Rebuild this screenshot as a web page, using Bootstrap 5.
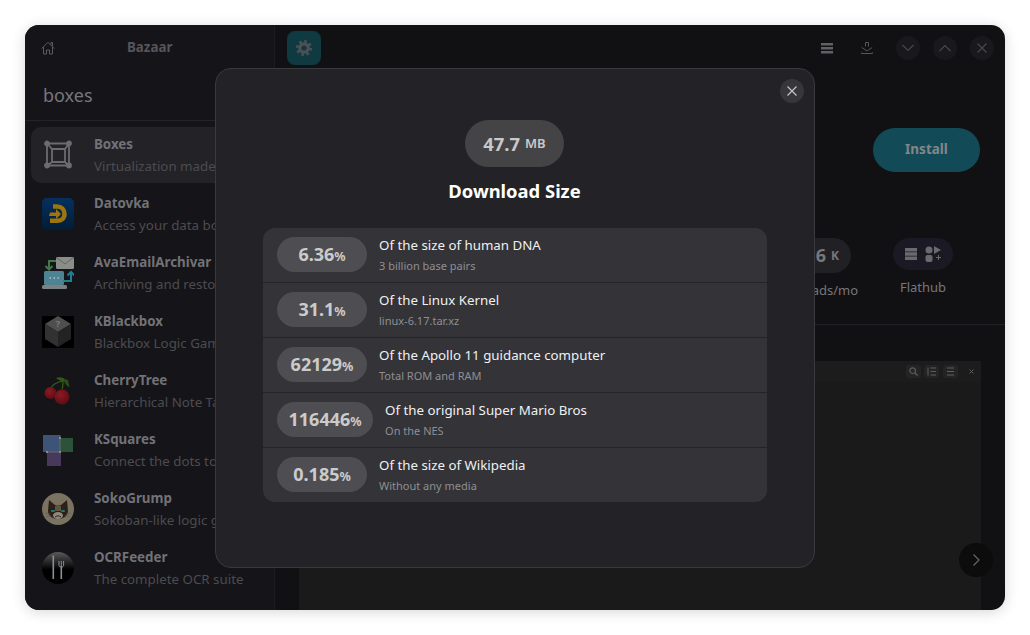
<!DOCTYPE html>
<html lang="en">
<head>
  <meta charset="UTF-8" />
  <title>Bazaar</title>
  <link href="https://cdn.jsdelivr.net/npm/bootstrap@5.3.0/dist/css/bootstrap.min.css" rel="stylesheet">
  <style>
    html, body { height: 100%; }
    body {
      font-family: "Noto Sans", sans-serif;
      background: #fff;
      padding: 25px 25px 25px 25px;
      overflow: hidden;
    }
    .app-window {
      height: 585px;
      border-radius: 14px;
      background: #111114;
      box-shadow: 0 2px 14px rgba(0,0,0,.16);
      overflow: hidden;
    }
    .app-side {
      width: 250px;
      background: #151419;
      border-right: 1px solid #1c1b20;
      flex-shrink: 0;
    }
    .side-head { height: 44px; padding: 0 16px; }
    .home-icon { margin-top: 2px; }
    .side-title { color: #55555a; font-size: 13.33px; font-weight: 700; margin: 2px 0 0 72px; }
    .search-word { color: #77777b; font-size: 18px; line-height: 25px; padding: 14px 18px 12px; border-bottom: 1px solid #242328; }
    .result-list { padding: 6px 6px 0; }
    .result-item { height: 56px; margin-bottom: 3px; padding: 0 11px; gap: 20px; border-radius: 10px; }
    .result-item.is-active { background: #232227; }
    .result-icon { width: 32px; height: 32px; flex-shrink: 0; display: block; }
    .result-name { color: #727276; font-size: 13.33px; font-weight: 700; line-height: 20px; white-space: nowrap; }
    .result-sub { color: #4c4c50; font-size: 13.33px; line-height: 20px; margin-top: 2px; white-space: nowrap; }
    .app-main { min-width: 0; }
    .main-head { height: 46px; padding: 6px 11px 0 12px; }
    .gear-tile { width: 34px; height: 34px; border-radius: 8px; background: #103a41; }
    .head-tools { height: 34px; }
    .tool-menu { margin-right: 28px; }
    .tool-get { margin-right: 23px; }
    .head-btns { gap: 13px; }
    .head-btn { width: 24px; height: 24px; border-radius: 50%; background: #19191d; }
    .install-row { padding: 57px 25px 0 0; height: 101px; }
    .install-btn { width: 107px; height: 44px; padding-bottom: 2px; border-radius: 22px; background: #124b57; color: #838688; font-size: 13.5px; font-weight: 700; }
    .stat-row { height: 86px; padding-right: 52px; margin-top: 66px; gap: 35px; }
    .stat-cell { color: #77777b; font-size: 13px; }
    .stat-pill { height: 35px; margin: 0 7px; border-radius: 18px; background: #212125; color: #77777b; font-size: 18px; font-weight: 700; padding: 0 12px 0 0; }
    .stat-pill span { font-size: 12px; margin-left: 5px; }
    .repo-pill { width: 60px; height: 32px; border-radius: 16px; background: #1a1924; }
    .shots-area { flex: 1; border-top: 1px solid #212125; padding: 36px 24px 0; min-height: 0; }
    .shot-panel { height: 100%; background: #1a1a1b; }
    .shot-bar { height: 21px; background: #1c1c1d; padding-right: 2px; gap: 3.5px; }
    .shot-tool { width: 15px; height: 13px; border-radius: 3px; background: #242425; }
    .shot-tool.is-bare { background: none; margin-left: 3px; }
    .next-btn { right: 12px; bottom: 33px; width: 34px; height: 34px; border-radius: 50%; background: #0c0c0d; }
    .size-dialog {
      left: 190px; top: 43px; width: 600px; height: 500px;
      background: #232327;
      border: 1px solid #3a3a3e;
      border-radius: 16px;
      padding: 51px 47px 0;
    }
    .dialog-close { right: 10px; top: 10px; width: 24px; height: 24px; border-radius: 50%; background: #37373b; border: 0; padding: 0; }
    .size-pill { height: 47px; width: 99px; margin-left: -1px; border-radius: 24px; background: #444447; color: #c9c9ca; font-size: 18.4px; font-weight: 700; gap: 5px; }
    .size-pill span { font-size: 13px; font-weight: 600; }
    .size-title { color: #fff; font-size: 18.4px; font-weight: 700; line-height: 25px; margin: 11px 1px 25px 0; }
    .fact-list { border-radius: 12px; background: #333338; overflow: hidden; }
    .fact-row { height: 55px; padding: 0 14px 1px; gap: 12px; border-top: 1px solid #242428; }
    .fact-row:first-child { border-top: 0; height: 54px; }
    .fact-pill { min-width: 90px; height: 35px; padding: 0 11.5px; border-radius: 18px; background: #4e4e52; color: #cbcbcc; font-size: 18px; font-weight: 700; white-space: nowrap; }
    .fact-pill span { font-size: 12.5px; }
    .fact-name { color: #f0f0f1; font-size: 13.3px; line-height: 18px; }
    .fact-note { color: #8f8f93; font-size: 11px; line-height: 15px; margin-top: 4px; }
  </style>
</head>
<body>

<div class="app-window d-flex position-relative">

  <div class="app-side d-flex flex-column">
    <div class="side-head d-flex align-items-center">
      <svg class="home-icon" width="14" height="14" viewBox="0 0 14 14" fill="none" stroke="#5c5c60" stroke-width="1"><path d="M.8 7.500 7 1.300l6.200 6.200M2.500 6v7h3V9h3v4h3V6M10 3.500V1.500h1.500v3.500"/></svg>
      <div class="side-title">Bazaar</div>
    </div>
    <div class="search-word">boxes</div>
    <div class="result-list">
      <div class="result-item is-active d-flex align-items-center">
        <svg class="result-icon" viewBox="0 0 32 32" fill="#6c6c70" stroke="#6c6c70" stroke-width="1.800"><path fill="none" d="M5 4.500h22v22H5zM10 10h13v13H10zM5 4.500l5 5.500M27 4.500 23 10M5 26.500l5-3.500M27 26.500 23 23"/><circle cx="5" cy="4.500" r="2"/><circle cx="27" cy="4.500" r="2"/><circle cx="5" cy="26.500" r="2"/><circle cx="27" cy="26.500" r="2"/></svg>
        <div><div class="result-name">Boxes</div><div class="result-sub">Virtualization made simple</div></div>
      </div>
      <div class="result-item d-flex align-items-center">
        <svg class="result-icon" viewBox="0 0 32 32"><defs><linearGradient id="dtvBg" x1="0" y1="0" x2="0" y2="1"><stop offset="0" stop-color="#05305f"/><stop offset="1" stop-color="#031c36"/></linearGradient></defs><rect width="32" height="32" rx="5" fill="url(#dtvBg)"/><path d="M11 8.500h4c4.500 0 7.500 3 7.500 7.500s-3 6.800-7.500 6.800H8" fill="none" stroke="#9c7510" stroke-width="4.500"/><path d="M8 14.500h6v-3.500l5 5-5 5v-3H7z" fill="#9c7510"/></svg>
        <div><div class="result-name">Datovka</div><div class="result-sub">Access your data boxes</div></div>
      </div>
      <div class="result-item d-flex align-items-center">
        <svg class="result-icon" viewBox="0 0 32 32"><rect x="14" y="0" width="18" height="12" rx="1.500" fill="#8a8d88"/><path d="M14.500 .5l8.500 6.500 8.500-6.500" fill="none" stroke="#666864"/><rect x="2" y="14" width="20" height="14" rx="1.500" fill="#4e8391"/><rect x="0" y="28" width="25" height="4" rx="1.500" fill="#7c8184"/><path d="M14 4H7v7M3.500 9 7 12.500 10.500 9" fill="none" stroke="#3f7a49" stroke-width="2"/><path d="M21 24h8v-8M25.500 18.500 29 15l3.500 3.500" fill="none" stroke="#1f7f95" stroke-width="2"/><path d="M7.500 21h1.500M11.500 21h1.500M15.500 21h1.500" stroke="#a9c3c9" stroke-width="1.500"/></svg>
        <div><div class="result-name">AvaEmailArchivar</div><div class="result-sub">Archiving and restoring emails</div></div>
      </div>
      <div class="result-item d-flex align-items-center">
        <svg class="result-icon" viewBox="0 0 32 32"><rect width="32" height="32" fill="#000"/><path d="M16 0 29 8 16 16 3 8z" fill="#4f4f4f"/><path d="M3 8l13 8v15L3 23z" fill="#323232"/><path d="M29 8 16 16v15l13-8z" fill="#232323"/><text x="16" y="11" text-anchor="middle" font-family="Noto Sans" font-weight="700" font-size="9" fill="#7c7c7c">?</text></svg>
        <div><div class="result-name">KBlackbox</div><div class="result-sub">Blackbox Logic Game</div></div>
      </div>
      <div class="result-item d-flex align-items-center">
        <svg class="result-icon" viewBox="0 0 32 32"><defs><radialGradient id="chBall" cx=".4" cy=".35" r=".7"><stop offset="0" stop-color="#8c1a22"/><stop offset="1" stop-color="#5a0c12"/></radialGradient></defs><path d="M21 6C15 7 10 10 9 13M21 6c0 3 0 6-1 8" fill="none" stroke="#3f5a1c" stroke-width="1.200"/><path d="M14 3c4-2 9 0 10 3-4 1-8-1-10-3z" fill="#2f5a18"/><path d="M22 4l4 1 1.500 7c-3-1-5.500-4-5.500-8z" fill="#29500f"/><circle cx="8.500" cy="18" r="6" fill="url(#chBall)"/><circle cx="20" cy="22" r="7.500" fill="url(#chBall)"/></svg>
        <div><div class="result-name">CherryTree</div><div class="result-sub">Hierarchical Note Taking</div></div>
      </div>
      <div class="result-item d-flex align-items-center">
        <svg class="result-icon" viewBox="0 0 32 32"><rect x="18" y="4" width="13" height="14" fill="#2a5339"/><rect x="5" y="18" width="14" height="14" fill="#46395c"/><rect x="1" y="1" width="17" height="17" fill="#3d5478"/><path d="M18 1v17H5" fill="none" stroke="#6a6a6a"/><path d="M17 3h2v2h-2zM17 17h2v2h-2zM4 17h2v2H4z" fill="#8a8a8a"/></svg>
        <div><div class="result-name">KSquares</div><div class="result-sub">Connect the dots to create</div></div>
      </div>
      <div class="result-item d-flex align-items-center">
        <svg class="result-icon" viewBox="0 0 32 32"><circle cx="16" cy="16" r="16" fill="#7b7361"/><path d="M7 7l6 5h6l6-5 1 11c0 5-5 8-10 8S6 23 6 18z" fill="#2c2119"/><path d="M13 13l3-1.500 3 1.500v5h-6z" fill="#5f5344"/><ellipse cx="16" cy="22.500" rx="5" ry="3.500" fill="#8f8a7c"/><path d="M13 24c2-1.500 4-1.500 6 0" fill="none" stroke="#2c2119"/><ellipse cx="11" cy="18" rx="2.200" ry="1.100" fill="#1f7f7a"/><ellipse cx="21" cy="18" rx="2.200" ry="1.100" fill="#1f7f7a"/><path d="M3 20l5 1M4 24l5-1.500M29 20l-5 1M28 24l-5-1.500" stroke="#5c564a" stroke-width=".6"/></svg>
        <div><div class="result-name">SokoGrump</div><div class="result-sub">Sokoban-like logic game</div></div>
      </div>
      <div class="result-item d-flex align-items-center">
        <svg class="result-icon" viewBox="0 0 32 32"><defs><linearGradient id="ocrBg" x1="0" y1="0" x2="0" y2="1"><stop offset="0" stop-color="#5a5a5a"/><stop offset=".55" stop-color="#000"/></linearGradient></defs><circle cx="16" cy="16" r="16" fill="url(#ocrBg)"/><path d="M11.300 3.500v23.500" stroke="#8a8f96" stroke-width="1.600"/><path d="M19.300 14v13" stroke="#8a8f96" stroke-width="1.600"/><path d="M17 9v4.500c0 1 1 1.500 2.300 1.500s2.300-.5 2.300-1.500V9M19.300 9v5" fill="none" stroke="#8a8f96"/></svg>
        <div><div class="result-name">OCRFeeder</div><div class="result-sub">The complete OCR suite</div></div>
      </div>
    </div>
  </div>

  <div class="app-main flex-grow-1 d-flex flex-column">
    <div class="main-head d-flex align-items-start justify-content-between">
      <div class="gear-tile d-flex align-items-center justify-content-center">
        <svg width="16" height="16" viewBox="0 0 16 16"><circle cx="8" cy="8" r="5.800" fill="#4e5154"/><circle cx="8" cy="8" r="6.800" fill="none" stroke="#4e5154" stroke-width="2.400" stroke-dasharray="2.700 2.640"/><circle cx="8" cy="8" r="2.600" fill="#103a41"/></svg>
      </div>
      <div class="head-tools d-flex align-items-center">
        <svg class="tool-menu" width="12" height="11" viewBox="0 0 12 11" fill="#616165"><path d="M0 0h12v2.400H0zM0 4h12v2.400H0zM0 8h12v2.400H0z"/></svg>
        <svg class="tool-get" width="12" height="12" viewBox="0 0 12 12" fill="none" stroke="#55555a"><path d="M4.500 4.500v-4h3v4M.8 5.500 6 9l5.200-3.500M.5 10.500v1h11v-1"/></svg>
        <div class="head-btns d-flex align-items-center">
          <div class="head-btn d-flex align-items-center justify-content-center"><svg width="12" height="8" viewBox="0 0 12 8" fill="none" stroke="#48484c" stroke-width="1.100"><path d="M.5 1 6 6.500 11.500 1"/></svg></div>
          <div class="head-btn d-flex align-items-center justify-content-center"><svg width="12" height="8" viewBox="0 0 12 8" fill="none" stroke="#48484c" stroke-width="1.100"><path d="M.5 7 6 1.500 11.500 7"/></svg></div>
          <div class="head-btn d-flex align-items-center justify-content-center"><svg width="10" height="10" viewBox="0 0 10 10" fill="none" stroke="#48484c" stroke-width="1.100"><path d="M.5.5l9 9M9.500.5l-9 9"/></svg></div>
        </div>
      </div>
    </div>
    <div class="install-row d-flex justify-content-end">
      <div class="install-btn d-flex align-items-center justify-content-center">Install</div>
    </div>
    <div class="stat-row d-flex justify-content-end">
      <div class="stat-cell text-center">
        <div class="stat-pill d-flex align-items-center justify-content-end">1.6<span>K</span></div>
        <div class="mt-2">Downloads/mo</div>
      </div>
      <div class="stat-cell text-center">
        <div class="repo-pill d-flex align-items-center justify-content-center gap-2">
          <svg width="12" height="12" viewBox="0 0 12 12" fill="#6a6a6e"><path d="M0 0h12v3.400H0zM0 4.300h12v3.400H0zM0 8.600h12V12H0z"/></svg>
          <svg width="16" height="16" viewBox="0 0 16 16" fill="#6a6a6e"><circle cx="4" cy="4" r="3.500"/><path d="M9 0l7 4-7 4z"/><rect x=".5" y="9" width="7" height="7" rx="2"/><path d="M11 11h2V9h1v2h2v1h-2v2h-1v-2h-2z"/></svg>
        </div>
        <div class="mt-2">Flathub</div>
      </div>
    </div>
    <div class="shots-area">
      <div class="shot-panel">
        <div class="shot-bar d-flex align-items-center justify-content-end">
          <div class="shot-tool d-flex align-items-center justify-content-center"><svg width="9" height="9" viewBox="0 0 9 9" fill="none" stroke="#5e5e5f" stroke-width="1.200"><circle cx="3.700" cy="3.700" r="2.800"/><path d="M6 6l2.500 2.500"/></svg></div>
          <div class="shot-tool d-flex align-items-center justify-content-center"><svg width="9" height="9" viewBox="0 0 9 9" fill="none" stroke="#5e5e5f"><path d="M3.500 1H9M3.500 4.500H9M3.500 8H9M1 .5v8"/></svg></div>
          <div class="shot-tool d-flex align-items-center justify-content-center"><svg width="9" height="9" viewBox="0 0 9 9" fill="none" stroke="#5e5e5f"><path d="M1 1h7M1 4.500h7M1 8h7"/></svg></div>
          <div class="shot-tool is-bare d-flex align-items-center justify-content-center"><svg width="5" height="5" viewBox="0 0 5 5" fill="none" stroke="#5e5e5f"><path d="M.5.5l4 4M4.500.5l-4 4"/></svg></div>
        </div>
      </div>
    </div>
  </div>

  <div class="next-btn position-absolute d-flex align-items-center justify-content-center">
    <svg width="8" height="12" viewBox="0 0 8 12" fill="none" stroke="#6a6a6c" stroke-width="1.100"><path d="M1.500.5 7 6l-5.500 5.500"/></svg>
  </div>

  <div class="size-dialog position-absolute">
    <button type="button" class="dialog-close position-absolute d-flex align-items-center justify-content-center" aria-label="Close">
      <svg width="10" height="10" viewBox="0 0 10 10" fill="none" stroke="#c4c4c5" stroke-width="1.200"><path d="M.5.5l9 9M9.500.5l-9 9"/></svg>
    </button>
    <div class="d-flex justify-content-center">
      <div class="size-pill d-flex align-items-center justify-content-center">47.7 <span>MB</span></div>
    </div>
    <div class="size-title text-center">Download Size</div>
    <div class="fact-list">
      <div class="fact-row d-flex align-items-center">
        <div class="fact-pill d-flex align-items-center justify-content-center"><div>6.36<span>%</span></div></div>
        <div><div class="fact-name">Of the size of human DNA</div><div class="fact-note">3 billion base pairs</div></div>
      </div>
      <div class="fact-row d-flex align-items-center">
        <div class="fact-pill d-flex align-items-center justify-content-center"><div>31.1<span>%</span></div></div>
        <div><div class="fact-name">Of the Linux Kernel</div><div class="fact-note">linux-6.17.tar.xz</div></div>
      </div>
      <div class="fact-row d-flex align-items-center">
        <div class="fact-pill d-flex align-items-center justify-content-center"><div>62129<span>%</span></div></div>
        <div><div class="fact-name">Of the Apollo 11 guidance computer</div><div class="fact-note">Total ROM and RAM</div></div>
      </div>
      <div class="fact-row d-flex align-items-center">
        <div class="fact-pill d-flex align-items-center justify-content-center"><div>116446<span>%</span></div></div>
        <div><div class="fact-name">Of the original Super Mario Bros</div><div class="fact-note">On the NES</div></div>
      </div>
      <div class="fact-row d-flex align-items-center">
        <div class="fact-pill d-flex align-items-center justify-content-center"><div>0.185<span>%</span></div></div>
        <div><div class="fact-name">Of the size of Wikipedia</div><div class="fact-note">Without any media</div></div>
      </div>
    </div>
  </div>

</div>

<script src="https://cdn.jsdelivr.net/npm/bootstrap@5.3.0/dist/js/bootstrap.bundle.min.js"></script>
</body>
</html>
